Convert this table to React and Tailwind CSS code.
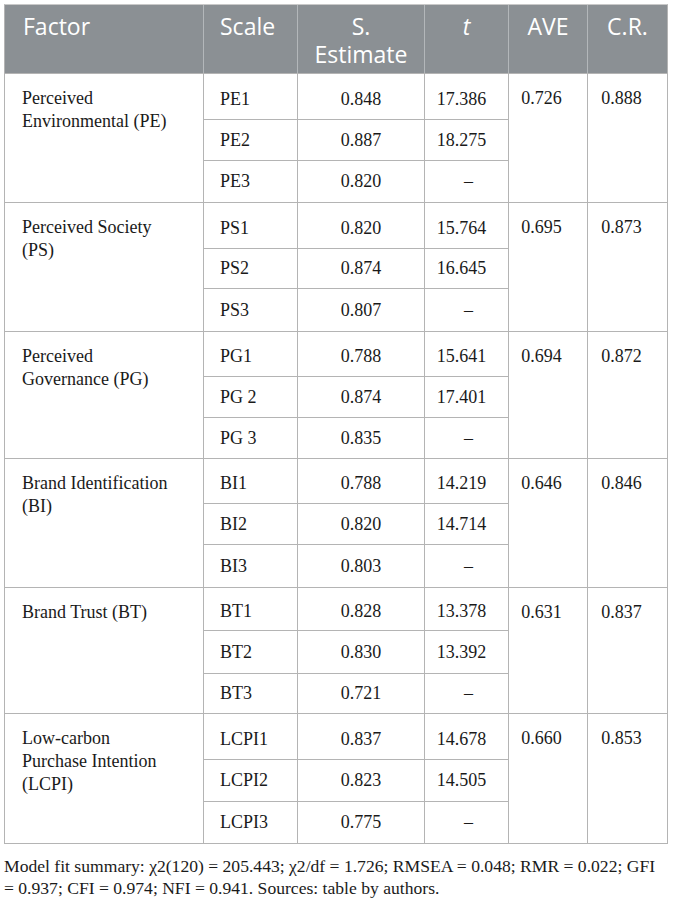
const groups = [
  {
    factor: 'Perceived Environmental (PE)',
    ave: '0.726',
    cr: '0.888',
    h: [46, 41, 41],
    rows: [['PE1', '0.848', '17.386'], ['PE2', '0.887', '18.275'], ['PE3', '0.820', '–']],
  },
  {
    factor: 'Perceived Society (PS)',
    ave: '0.695',
    cr: '0.873',
    h: [46, 40, 42],
    rows: [['PS1', '0.820', '15.764'], ['PS2', '0.874', '16.645'], ['PS3', '0.807', '–']],
  },
  {
    factor: 'Perceived Governance (PG)',
    ave: '0.694',
    cr: '0.872',
    h: [45, 41, 40],
    rows: [['PG1', '0.788', '15.641'], ['PG 2', '0.874', '17.401'], ['PG 3', '0.835', '–']],
  },
  {
    factor: 'Brand Identification (BI)',
    ave: '0.646',
    cr: '0.846',
    h: [45, 41, 42],
    rows: [['BI1', '0.788', '14.219'], ['BI2', '0.820', '14.714'], ['BI3', '0.803', '–']],
  },
  {
    factor: 'Brand Trust (BT)',
    ave: '0.631',
    cr: '0.837',
    h: [43, 43, 39],
    rows: [['BT1', '0.828', '13.378'], ['BT2', '0.830', '13.392'], ['BT3', '0.721', '–']],
  },
  {
    factor: 'Low-carbon Purchase Intention (LCPI)',
    ave: '0.660',
    cr: '0.853',
    h: [46, 42, 41],
    rows: [['LCPI1', '0.837', '14.678'], ['LCPI2', '0.823', '14.505'], ['LCPI3', '0.775', '–']],
  },
];

const serif = { fontFamily: '"Liberation Serif", "Times New Roman", serif' };

const Group = ({ group, last }) => (
  <div className={`flex ${last ? '' : 'border-b border-[#b4b4b4]'}`}>
    {/* Factor */}
    <div className="w-[199px] shrink-0 border-r border-[#b4b4b4] pl-[17px] pr-[30px] pt-[13px] leading-[23px]">
      {group.factor}
    </div>

    {/* Scale / estimate / t rows */}
    <div className="flex flex-col">
      {group.rows.map((row, i) => (
        <div
          key={row[0]}
          className={`flex items-stretch ${i < 2 ? 'border-b border-[#b4b4b4]' : ''}`}
          style={{ height: group.h[i] }}
        >
          <div className={`w-[94px] border-r border-[#b4b4b4] pl-[16px] flex items-center leading-[23px] ${i === 0 ? 'pt-[5px]' : ''}`}>
            {row[0]}
          </div>
          <div className={`w-[127px] border-r border-[#b4b4b4] flex items-center justify-center leading-[23px] ${i === 0 ? 'pt-[5px]' : ''}`}>
            {row[1]}
          </div>
          <div
            className={`w-[84px] border-r border-[#b4b4b4] flex items-center justify-center leading-[23px] ${
              row[2] === '–' ? 'pl-[4px]' : 'pr-[10px]'
            } ${i === 0 ? 'pt-[5px]' : ''}`}
          >
            {row[2]}
          </div>
        </div>
      ))}
    </div>

    <div className="w-[79px] shrink-0 border-r border-[#b4b4b4] pt-[13px] pr-[13px] text-center leading-[23px]">
      {group.ave}
    </div>
    <div className="w-[79px] shrink-0 pt-[13px] pr-[12px] text-center leading-[23px]">{group.cr}</div>
  </div>
);

export default function App() {
  return (
    <div className="w-[673px] h-[900px] bg-white pt-[4px] overflow-hidden text-[#1a1a1a]" style={serif}>
      <div className="ml-[4px] w-[664px] border border-[#b4b4b4] border-t-[#c9c9c9] text-[18px]">
        {/* Header */}
        <div
          className="flex h-[69px] bg-[#8b9094] text-white text-[23px] leading-[28px] border-b border-[#b4b4b4]"
          style={{ fontFamily: '"Open Sans", "Liberation Sans", sans-serif' }}
        >
          <div className="w-[199px] border-r border-[#b3b7ba] pl-[18px] pt-[7px]">Factor</div>
          <div className="w-[94px] border-r border-[#b3b7ba] pl-[16px] pt-[7px]">Scale</div>
          <div className="w-[127px] border-r border-[#b3b7ba] pt-[7px] text-center">
            S.
            <br />
            Estimate
          </div>
          <div className="w-[84px] border-r border-[#b3b7ba] pt-[7px] text-center italic">t</div>
          <div className="w-[79px] border-r border-[#b3b7ba] pt-[7px] text-center">AVE</div>
          <div className="w-[79px] pt-[7px] text-center">C.R.</div>
        </div>

        {groups.map((g, i) => (
          <Group key={g.factor} group={g} last={i === groups.length - 1} />
        ))}
      </div>

      <p className="w-[667px] pl-[4px] mt-[11px] text-[17.6px] leading-[22px]">
        Model fit summary: χ2(120) = 205.443; χ2/df = 1.726; RMSEA = 0.048; RMR = 0.022; GFI = 0.937; CFI =
        0.974; NFI = 0.941. Sources: table by authors.
      </p>
    </div>
  );
}
